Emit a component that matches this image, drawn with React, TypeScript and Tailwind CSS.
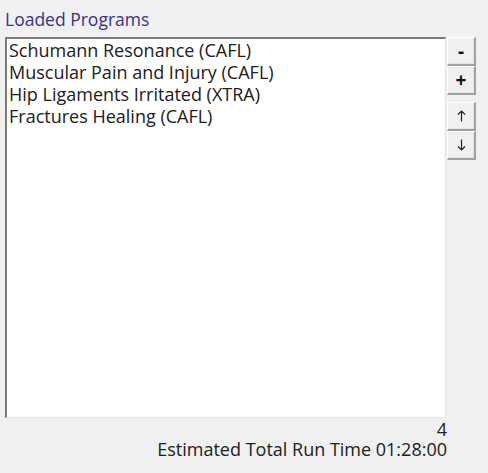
import React from 'react';

const programs = [
  'Schumann Resonance (CAFL)',
  'Muscular Pain and Injury (CAFL)',
  'Hip Ligaments Irritated (XTRA)',
  'Fractures Healing (CAFL)',
];

const btn =
  'w-[29px] h-[29px] flex items-center justify-center bg-[#f0f0f0] border-t border-l border-t-[#ffffff] border-l-[#ffffff] border-r-2 border-b-2 border-r-[#a0a0a0] border-b-[#a0a0a0] shadow-[inset_-1px_-1px_0_#e3e3e3] text-[#111] leading-none';

const Arrow = ({ down }: { down?: boolean }) => (
  <svg width="9" height="12" viewBox="0 0 9 12" fill="none" stroke="#222" strokeWidth="1.2" className={down ? 'rotate-180' : ''}>
    <path d="M4.5 11.5V1M1 4.5L4.5 1L8 4.5" />
  </svg>
);

export default function App() {
  return (
    <div
      className="w-[488px] h-[473px] bg-[#f0f0f0] flex flex-col overflow-hidden"
      style={{ fontFamily: '"Open Sans", "Noto Sans", sans-serif' }}
    >
      <div className="pl-[5px] pt-[7px] h-[37px] text-[17.5px] text-[#34348a] leading-[24px]">Loaded Programs</div>
      <div className="flex pl-[5px]">
        <div className="w-[441px] h-[381px] bg-white border-l-2 border-t-2 border-l-[#7a7a7a] border-t-[#7a7a7a] border-r border-b border-r-[#e3e3e3] border-b-[#e3e3e3] pl-[2px] pt-0">
          {programs.map((p) => (
            <div key={p} className="h-[22px] text-[18px] leading-[22px] text-[#202020] whitespace-nowrap">
              {p}
            </div>
          ))}
        </div>
        <div className="flex flex-col ml-[1px]">
          <button className={`${btn} text-[19px] font-bold`}>-</button>
          <button className={`${btn} text-[19px] font-bold`}>+</button>
          <div className="h-[7px]" />
          <button className={btn}><Arrow /></button>
          <button className={btn}><Arrow down /></button>
        </div>
      </div>
      <div className="w-[447px] flex flex-col items-end text-[18px] leading-[20px] text-[#202020] pt-[1px]">
        <div>4</div>
        <div>Estimated Total Run Time 01:28:00</div>
      </div>
    </div>
  );
}
